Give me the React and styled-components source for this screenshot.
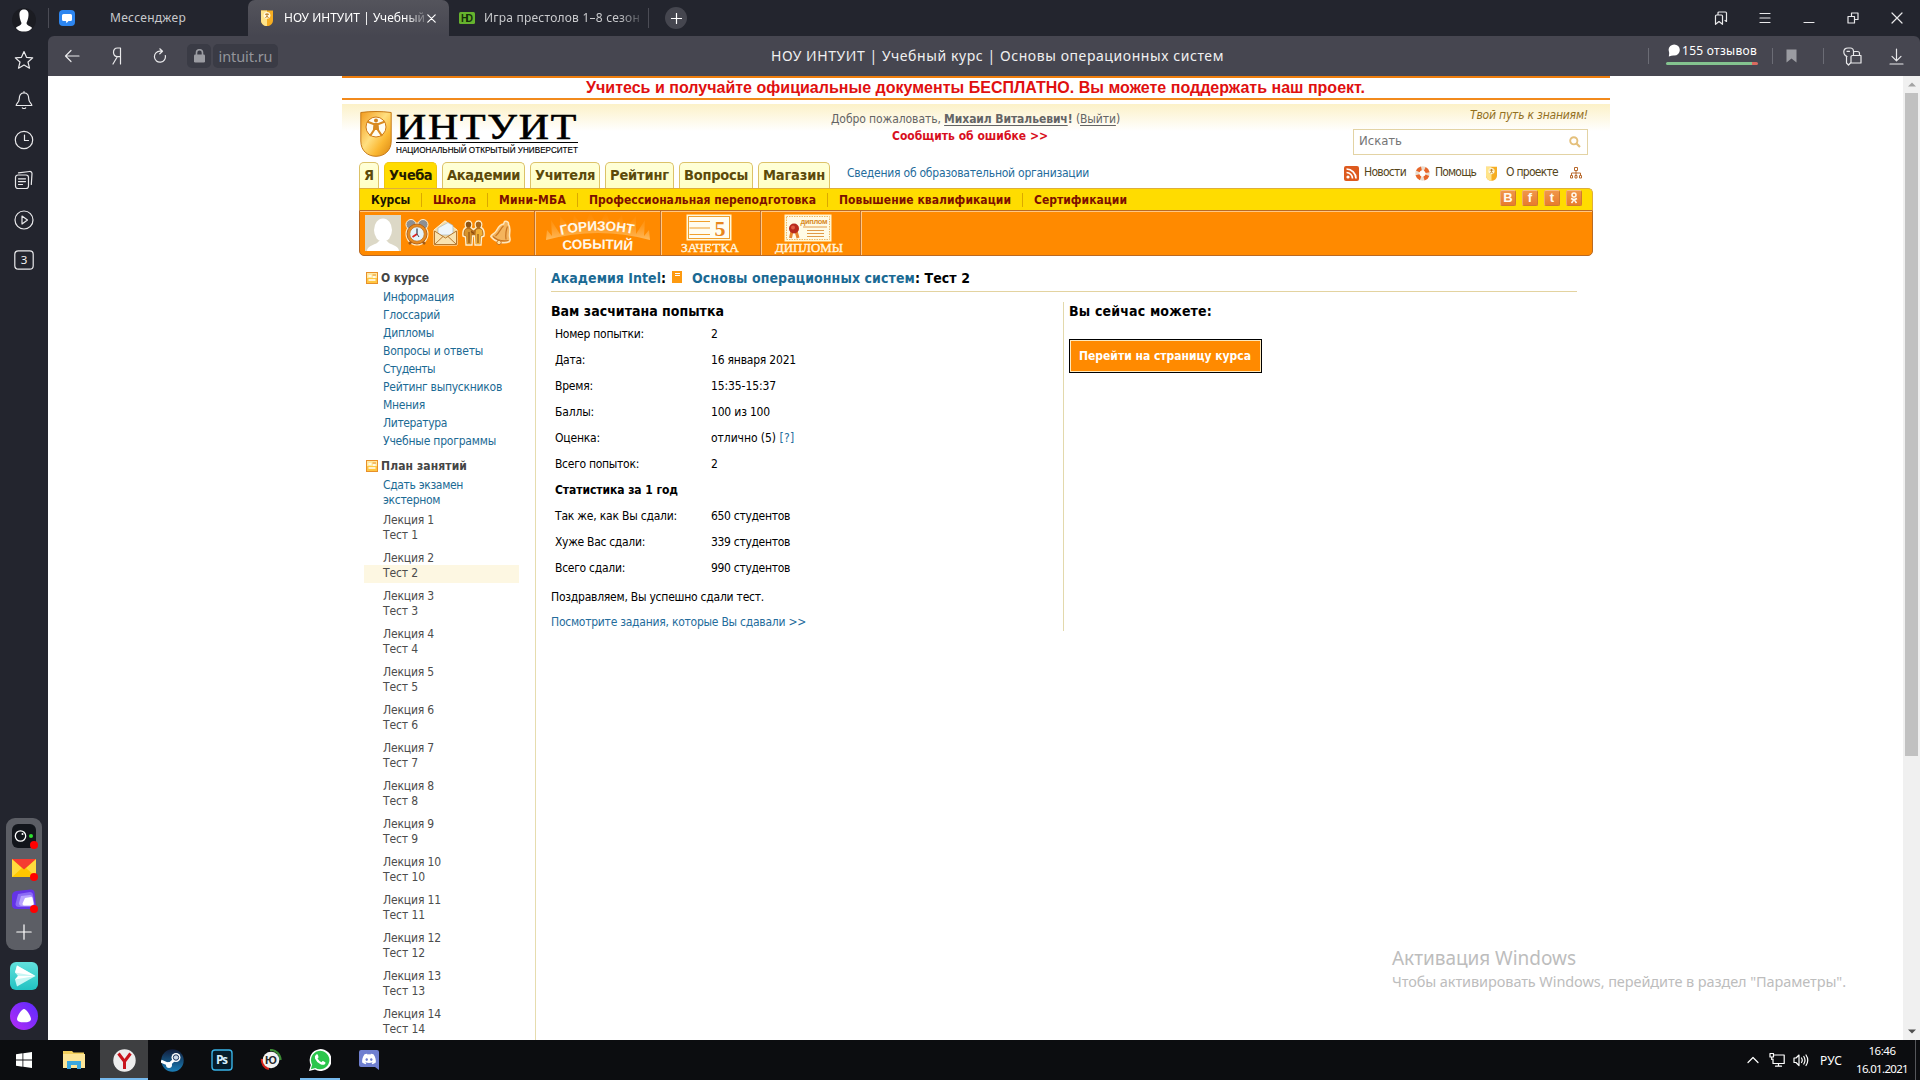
import React, { useLayoutEffect, useRef } from "react";
import styled, { createGlobalStyle, css } from "styled-components";
import { FaDiscord } from "react-icons/fa";

const tahoma = `Tahoma, "DejaVu Sans Condensed", "DejaVu Sans", sans-serif`;
const segoe = `"Segoe UI", "Noto Sans", "Open Sans", sans-serif`;

const Global = createGlobalStyle`
  * { box-sizing: border-box; }
  body { margin: 0; overflow: hidden; background: #fff; }
  svg { display: block; flex: none; }
`;

/* ---------- text that tracks itself out to a known width ---------- */
const FitBox = styled.span`
  display: inline-block;
  flex: none;
  white-space: nowrap;
  width: ${(p) => p.$w}px;
`;
function Fit({ w, children, className }) {
  const ref = useRef(null);
  useLayoutEffect(() => {
    const el = ref.current;
    el.style.letterSpacing = "0px";
    const natural = el.getBoundingClientRect().width;
    const n = el.textContent.length;
    el.style.letterSpacing = `${(w - natural) / n}px`;
  }, [w, children]);
  return (
    <FitBox $w={w} className={className}>
      <span ref={ref}>{children}</span>
    </FitBox>
  );
}

/* ---------- frame ---------- */
const Screen = styled.div`
  width: 1920px;
  height: 1080px;
  display: flex;
  flex-direction: column;
  overflow: hidden;
  position: relative;
  font-family: ${tahoma};
  font-size: 12px;
  color: #000;
`;
const Browser = styled.div`
  height: 1040px;
  display: flex;
  background: #23252e;
`;
const Main = styled.div`
  width: 1872px;
  display: flex;
  flex-direction: column;
`;

/* ---------- browser side panel ---------- */
const Side = styled.aside`
  width: 48px;
  display: flex;
  flex-direction: column;
  align-items: center;
`;
const SideSlot = styled.div`
  height: 40px;
  width: 48px;
  display: flex;
  align-items: center;
  justify-content: center;
`;
const Dock = styled.div`
  margin-top: auto;
  width: 36px;
  height: 132px;
  border-radius: 9px;
  background: #5c5e65;
  display: flex;
  flex-direction: column;
  align-items: center;
  padding-top: 2px;
`;
const DockSlot = styled.div`
  width: 36px;
  height: 32px;
  display: flex;
  align-items: center;
  justify-content: center;
`;
const BigSlot = styled.div`
  height: 40px;
  display: flex;
  align-items: center;
  margin-top: ${(p) => p.$top || 0}px;
  margin-bottom: ${(p) => p.$bottom || 0}px;
`;

/* ---------- tab strip ---------- */
const Strip = styled.div`
  height: 36px;
  display: flex;
  align-items: stretch;
  font-family: ${segoe};
  font-size: 12px;
  color: #c9cacd;
`;
const BTab = styled.div`
  width: ${(p) => p.$w}px;
  display: flex;
  align-items: center;
  padding-left: ${(p) => p.$pl}px;
  line-height: 36px;
  ${(p) =>
    p.$active &&
    css`
      background: linear-gradient(#54545c, #464650);
      border-radius: 7px 7px 0 0;
      color: #fff;
    `}
`;
const TabText = styled.div`
  margin-left: ${(p) => p.$ml}px;
`;
const FadeText = styled(TabText)`
  width: ${(p) => p.$w}px;
  mask-image: linear-gradient(to right, #000 85%, transparent 103%);
`;
const VLine = styled.i`
  width: 1px;
  flex: none;
  height: ${(p) => p.$h}px;
  background: ${(p) => p.$c || "#4b4c55"};
  margin: 0 ${(p) => p.$r || 0}px 0 ${(p) => p.$l || 0}px;
  align-self: center;
`;
const PlusBtn = styled.div`
  width: 22px;
  height: 22px;
  border-radius: 50%;
  background: #45464f;
  align-self: center;
  display: flex;
  align-items: center;
  justify-content: center;
`;
const WinBtns = styled.div`
  margin-left: auto;
  padding-right: 1px;
  display: flex;
  align-items: center;
`;
const WinSlot = styled.div`
  width: 44px;
  display: flex;
  justify-content: center;
`;

/* ---------- toolbar ---------- */
const Toolbar = styled.div`
  height: 40px;
  background: #464650;
  border-radius: 6px 6px 0 0;
  display: flex;
  align-items: center;
  font-family: ${segoe};
  color: #fff;
`;
const IconCell = styled.div`
  width: ${(p) => p.$w}px;
  display: flex;
  justify-content: center;
`;
const AddrBox = styled.div`
  height: 24px;
  width: ${(p) => p.$w}px;
  margin-right: ${(p) => p.$mr}px;
  border-radius: 5px;
  background: #3a3b45;
  display: flex;
  align-items: center;
  justify-content: center;
  font-size: 14.5px;
  line-height: 22px;
  color: #94959b;
`;
const PageTitle = styled.div`
  margin-left: 493px;
  font-size: 14px;
  line-height: 38px;
  color: #f0f0f1;
`;
const Reviews = styled.div`
  width: 92px;
  margin-left: 17px;
  margin-top: -1px;
  display: flex;
  flex-direction: column;
  font-size: 12px;
  line-height: 14px;
  height: 24px;
`;
const ReviewLine = styled.div`
  display: flex;
  height: 18px;
  padding-left: 2px;
  gap: 2px;
`;
const Meter = styled.div`
  height: 3px;
  border-radius: 2px;
  background: linear-gradient(to right, #84c38f 0 86px, #d9695f 86px);
`;

/* ---------- viewport ---------- */
const Viewport = styled.div`
  height: 964px;
  display: flex;
  background: #fff;
`;
const Page = styled.div`
  width: 1855px;
  overflow: hidden;
  padding-left: 294px;
`;
const Scroll = styled.div`
  width: 17px;
  background: #f0f0f0;
  display: flex;
  flex-direction: column;
  align-items: center;
`;
const Arrow = styled.div`
  height: 17px;
  display: flex;
  align-items: center;
`;
const Thumb = styled.div`
  width: 13px;
  height: 663px;
  background: #c1c1c1;
  margin-bottom: auto;
`;

const Site = styled.div`
  width: 1268px;
  height: 964px;
  overflow: hidden;
`;
const Banner = styled.div`
  height: 24px;
  border-top: 2px solid #ee7d0c;
  border-bottom: 2px solid #f28a1c;
  margin-bottom: 4px;
  padding-left: 244px;
  font: bold 16px/20px Arial, "Liberation Sans", sans-serif;
  color: #e01010;
`;
const Head = styled.div`
  background: linear-gradient(#fcf1c8 0, #fff 27px);
  padding: 0 17px;
`;
const HeadRow = styled.div`
  height: 58px;
  display: flex;
`;
const Logo = styled.div`
  padding: 7px 0 0 1px;
  display: flex;
  gap: 4px;
`;
const Welcome = styled.div`
  margin-left: 247px;
  padding-top: 7px;
  display: flex;
  flex-direction: column;
  line-height: 17px;
  color: #646464;
  u { text-decoration-thickness: 1px; text-underline-offset: 2px; }
`;
const Report = styled.div`
  padding-left: 61px;
  font-weight: bold;
  color: #d80f1e;
`;
const SearchCol = styled.div`
  margin-left: auto;
  width: 235px;
  margin-right: 5px;
  display: flex;
  flex-direction: column;
`;
const Motto = styled.div`
  height: 25px;
  line-height: 22px;
  font-style: italic;
  color: #93701f;
  text-align: right;
`;
const SearchBox = styled.div`
  height: 26px;
  border: 1px solid #e3d3a4;
  background: #fff;
  display: flex;
  align-items: center;
  justify-content: space-between;
  padding: 0 6px 0 5px;
  color: #757575;
  font-size: 13px;
  line-height: 20px;
`;
const SearchText = styled.span`
  padding-bottom: 2px;
`;
const NavRow = styled.nav`
  height: 26px;
  display: flex;
  gap: 5px;
`;
const SiteTab = styled.a`
  width: ${(p) => p.$w}px;
  height: 26px;
  border: 1px solid ${(p) => (p.$on ? "#f2c80a" : "#dcc268")};
  border-bottom: 0;
  border-radius: 5px 5px 0 0;
  background: ${(p) => (p.$on ? "#ffdc00" : "linear-gradient(#ffffd8, #ffffc4)")};
  color: ${(p) => (p.$on ? "#241c00" : "#5c4a0a")};
  font-weight: bold;
  font-size: 14.5px;
  line-height: 25px;
  padding-left: 4px;
`;
const OrgLink = styled.a`
  margin-left: 12px;
  line-height: 22px;
  color: #246c9c;
`;
const Tools = styled.div`
  margin-left: auto;
  display: flex;
  align-items: center;
  height: 22px;
  color: #54451a;
  padding-right: 11px;
`;
const ToolText = styled.span`
  margin: -3px ${(p) => p.$r}px 0 ${(p) => p.$l}px;
`;
const Yellow = styled.div`
  width: 1234px;
  margin-left: 17px;
  height: 22px;
  background: #ffdc00;
  border: 1px solid #dfae3a;
  border-bottom: 0;
  border-radius: 0 5px 0 0;
  display: flex;
  align-items: center;
  font-weight: bold;
  padding: 0 10px 0 11px;
`;
const SubItem = styled.a`
  color: ${(p) => (p.$on ? "#1a1400" : "#7c1000")};
  line-height: 20px;
`;
const Social = styled.div`
  margin-left: auto;
  margin-top: -3px;
  display: flex;
  gap: 6px;
`;
const SocBtn = styled.span`
  width: 16px;
  height: 16px;
  border-radius: 2px;
  border: 1px solid #d07a30;
  border-top-color: #f7bd84;
  border-left-color: #f0a868;
  background: linear-gradient(#f0964a, #e87c2c);
  color: #fffaf0;
  font: bold 13px/14px Arial, "Liberation Sans", sans-serif;
  display: flex;
  justify-content: center;
  align-items: center;
`;
const Orange = styled.div`
  width: 1234px;
  margin-left: 17px;
  height: 46px;
  background: #ff8a00;
  border: 1px solid #b96a24;
  border-radius: 0 0 5px 5px;
  box-shadow: inset 0 1px 0 #ffc684;
  display: flex;
`;
const OCell = styled.div`
  width: ${(p) => p.$w}px;
  height: 44px;
  border-right: 1px solid #c0702a;
  box-shadow: 1px 0 0 #ffc684;
  display: flex;
  align-items: center;
  justify-content: center;
`;
const UserCell = styled(OCell)`
  justify-content: flex-start;
  padding-left: 5px;
  gap: 4px;
`;

/* ---------- page body ---------- */
const Body = styled.div`
  display: flex;
  padding: 12px 0 0 17px;
`;
const Aside = styled.aside`
  width: 177px;
  height: 800px;
  border-right: 1px solid #e6dcae;
  padding-left: 5px;
`;
const SecTitle = styled.div`
  display: flex;
  align-items: center;
  gap: 3px;
  height: 20px;
  margin-top: ${(p) => p.$top || 0}px;
  padding-left: 2px;
  font-weight: bold;
  color: #454545;
`;
const List = styled.div`
  display: flex;
  flex-direction: column;
  padding-left: 19px;
  color: #1b6a94;
`;
const Item = styled.a`
  line-height: 18px;
  height: 18px;
`;
const Exam = styled(List)`
  padding-top: 2px;
  line-height: 15px;
`;
const LessonList = styled.div`
  padding-top: 5px;
`;
const Lesson = styled.div`
  display: flex;
  flex-direction: column;
  width: 155px;
  height: 38px;
  line-height: 15px;
  color: #4c4c4c;
`;
const Line = styled.span`
  padding-left: 19px;
  height: 15px;
  ${(p) =>
    p.$hl &&
    css`
      height: 18px;
      margin-top: -1px;
      padding-top: 1px;
      background: #fdf7e2;
    `}
`;
const Content = styled.main`
  width: 1026px;
  margin-left: 15px;
`;
const Crumbs = styled.div`
  height: 24px;
  border-bottom: 1px solid #e3d3a0;
  display: flex;
  font-weight: bold;
  font-size: 14px;
  line-height: 20px;
  a { color: #1b6a94; }
`;
const BookWrap = styled.span`
  margin: 3px 10px 0 6px;
`;
const Cols = styled.div`
  display: flex;
  padding-top: 10px;
`;
const Left = styled.section`
  width: 513px;
  height: 329px;
  border-right: 1px solid #e3d9ac;
`;
const Right = styled.section`
  padding-left: 5px;
`;
const H = styled.h2`
  margin: 0;
  font-size: 14px;
  line-height: 19px;
  height: 19px;
`;
const Row = styled.div`
  display: flex;
  height: 26px;
  line-height: 26px;
  padding-left: 4px;
`;
const Key = styled.div`
  width: 156px;
  font-weight: ${(p) => (p.$b ? "bold" : "normal")};
`;
const LinkText = styled.a`
  color: #246c9c;
`;
const Para = styled.p`
  margin: ${(p) => p.$top}px 0 0;
  line-height: 20px;
  height: 20px;
  color: ${(p) => p.$c || "#000"};
`;
const GoBtn = styled.button`
  display: block;
  margin: 18px 0 0;
  padding: 1px 0 0 9px;
  width: 193px;
  height: 34px;
  border: 1px solid #000;
  box-shadow: inset 0 0 0 1px #ffe9bd;
  background: #ff8a00;
  color: #fff;
  text-align: left;
  font: bold 12px/31px ${tahoma};
`;

/* ---------- activation watermark ---------- */
const Watermark = styled.div`
  position: absolute;
  left: 1392px;
  top: 945px;
  font-family: ${segoe};
  color: #bdbdbd;
  display: flex;
  flex-direction: column;
`;
const WmBig = styled.div`
  font-size: 19px;
  line-height: 26px;
`;
const WmSmall = styled.div`
  font-size: 14.5px;
  line-height: 20px;
`;

/* ---------- taskbar ---------- */
const Taskbar = styled.footer`
  height: 40px;
  background: #0c0d10;
  display: flex;
  font-family: ${segoe};
  color: #fff;
`;
const TaskBtn = styled.div`
  width: ${(p) => p.$w || 49}px;
  height: 40px;
  display: flex;
  align-items: center;
  justify-content: center;
  background: ${(p) => (p.$on ? "#3e3f41" : "transparent")};
  box-shadow: ${(p) => (p.$run ? "inset 0 -2px 0 #76b9ed" : "none")};
`;
const Tray = styled.div`
  margin-left: auto;
  display: flex;
  align-items: center;
  font-size: 12px;
`;
const Clock = styled.div`
  width: 52px;
  margin: 0 7px 0 14px;
  height: 40px;
  display: flex;
  flex-direction: column;
  align-items: center;
  font-size: 11.5px;
  line-height: 18px;
  padding-top: 2px;
`;

const Stroke = (p) => (
  <svg width={p.s || 20} height={p.h || p.s || 20} viewBox={p.vb || "0 0 20 20"} fill="none" stroke={p.c || "#e9e9eb"} strokeWidth={p.sw || 1.2} strokeLinecap="round" strokeLinejoin="round">
    {p.children}
  </svg>
);

const Shield = () => (
  <svg width="32" height="46" viewBox="0 0 32 46">
    <defs>
      <linearGradient id="shg" x1="0" y1="0" x2="1" y2="1">
        <stop offset="0" stopColor="#f29a1c" />
        <stop offset=".45" stopColor="#ffdf80" />
        <stop offset=".7" stopColor="#fbb832" />
        <stop offset="1" stopColor="#d98512" />
      </linearGradient>
    </defs>
    <path d="M.8 1.5C10 .2 22 .2 31.2 1.5V30C31.2 40 24 45.3 16 45.3S.8 40 .8 30Z" fill="url(#shg)" stroke="#c67a18" />
    <circle cx="16" cy="16" r="10" fill="#fffdf2" stroke="#d07a18" />
    <circle cx="16" cy="9.5" r="2" fill="#d0801c" />
    <path d="M7 10.5L14 13.2H18L25 10.5M16 13V19M14.5 13L14 19L10 25M17.5 13L18 19L22 25" stroke="#d98a20" strokeWidth="2.2" fill="none" />
  </svg>
);
const MiniShield = ({ w, h }) => (
  <svg width={w} height={h} viewBox="0 0 12 16">
    <path d="M0 .5H12V10C12 14 9 16 6 16S0 14 0 10Z" fill="#f6ad22" />
    <path d="M0 .5H6V16C3 16 0 14 0 10Z" fill="#ffe48a" />
    <circle cx="6" cy="5.3" r="3.4" fill="#fff8dc" />
    <path d="M4 4.3H8M6 3V6L4.5 8M6 6L7.5 8" stroke="#b5761c" fill="none" strokeWidth=".9" />
  </svg>
);

const SectionIcon = () => (
  <svg width="12" height="12" viewBox="0 0 12 12">
    <rect x=".5" y=".5" width="11" height="11" fill="#ffe9a0" stroke="#e8902a" />
    <path d="M1 6H11V11H1Z" fill="#ffc640" />
    <path d="M2.500 4H5.500M2.500 8H9.500M7 5H9.500" stroke="#fff" strokeWidth="1.3" />
    <path d="M6.500 3H10" stroke="#e8902a" />
  </svg>
);

const courseLinks = [
  ["Информация", 71], ["Глоссарий", 57], ["Дипломы", 51], ["Вопросы и ответы", 100], ["Студенты", 52],
  ["Рейтинг выпускников", 119], ["Мнения", 42], ["Литература", 64], ["Учебные программы", 113],
];
const tabs = [
  ["Я", 20, 10], ["Учеба", 53, 43], ["Академии", 83, 73], ["Учителя", 70, 60], ["Рейтинг", 69, 59], ["Вопросы", 74, 64], ["Магазин", 72, 62],
];
const sub = [
  ["Курсы", 39], ["Школа", 43], ["Мини-МБА", 67], ["Профессиональная переподготовка", 227], ["Повышение квалификации", 172], ["Сертификации", 93],
];
const rows = [
  ["Номер попытки:", 89, "2", 7], ["Дата:", 30, "16 января 2021", 85], ["Время:", 38, "15:35-15:37", 65],
  ["Баллы:", 39, "100 из 100", 59], ["Оценка:", 45, "отлично (5)", 65, true], ["Всего попыток:", 84, "2", 7],
  ["Статистика за 1 год", 123], ["Так же, как Вы сдали:", 122, "650 студентов", 79], ["Хуже Вас сдали:", 90, "339 студентов", 79],
  ["Всего сдали:", 70, "990 студентов", 79],
];

function SidePanel() {
  return (
    <Side>
      <SideSlot>
        <svg width="24" height="24" viewBox="0 0 24 24">
          <circle cx="12" cy="12" r="12" fill="#1b1c22" />
          <path d="M12 1.500C15.500 1.500 16.800 4 16.500 7.500C16.300 11 15 13.500 14.500 15C14.500 18 20 18.500 20 20C18 23 14.500 23.500 12 23.500S6 23 4 20C4 18.500 9.500 18 9.500 15C9 13.500 7.700 11 7.500 7.500C7.200 4 8.500 1.500 12 1.500Z" fill="#fff" />
        </svg>
      </SideSlot>
      <SideSlot><Stroke><path d="M10 1.500L12.500 7.300L18.700 7.900L14 12L15.500 18.200L10 14.900L4.500 18.200L6 12L1.300 7.900L7.500 7.300Z" /></Stroke></SideSlot>
      <SideSlot><Stroke><path d="M10 1.500V2.800M10 2.800C6.500 2.800 5.300 5.500 5.300 8.500C5.300 12.500 2.200 13.500 2.200 15.500H17.800C17.800 13.500 14.700 12.500 14.700 8.500C14.700 5.500 13.500 2.800 10 2.800ZM8.300 17.800C9.200 18.700 10.800 18.700 11.700 17.800" /></Stroke></SideSlot>
      <SideSlot><Stroke><circle cx="10" cy="10" r="8.700" /><path d="M10.500 5V10.500H14.500" /></Stroke></SideSlot>
      <SideSlot><Stroke><rect x="1.500" y="5" width="13" height="13.500" rx="2.500" /><path d="M4.500 2.800L15.500 1.500C17 1.300 18 2.200 18 3.500L17.300 14.500M4.500 8.800H11.500M4.500 11.600H11.500M4.500 14.500H8.500" /></Stroke></SideSlot>
      <SideSlot><Stroke><circle cx="10" cy="10" r="9" /><path d="M8 6L13.500 10L8 14Z" /></Stroke></SideSlot>
      <SideSlot>
        <svg width="20" height="20" viewBox="0 0 20 20">
          <rect x=".8" y=".8" width="18.400" height="18.400" rx="3.500" fill="none" stroke="#e9e9eb" strokeWidth="1.200" />
          <text x="10" y="14.300" textAnchor="middle" fontSize="11.500" fill="#f2f2f3" fontFamily="Noto Sans, sans-serif">3</text>
        </svg>
      </SideSlot>
      <Dock>
        <DockSlot>
          <svg width="28" height="28" viewBox="0 0 28 28">
            <rect x="2" y="2" width="24" height="24" rx="6" fill="#12151b" />
            <circle cx="10.500" cy="14" r="5.200" fill="none" stroke="#fff" strokeWidth="1.300" />
            <circle cx="12.500" cy="12" r="1" fill="#fff" /><circle cx="21" cy="14" r="2" fill="#2fe02f" /><circle cx="24" cy="23" r="4" fill="#f00" />
          </svg>
        </DockSlot>
        <DockSlot>
          <svg width="28" height="28" viewBox="0 0 28 28">
            <path d="M2 5H26V23H2Z" fill="#ffc800" /><path d="M2 5L12 14L2 23Z M26 5L16 14L26 23Z" fill="#ffdb3d" />
            <path d="M2 5H26L14 15.500Z" fill="#f53b31" /><circle cx="24" cy="23" r="4" fill="#f00" />
          </svg>
        </DockSlot>
        <DockSlot>
          <svg width="28" height="28" viewBox="0 0 28 28">
            <path d="M6 5L21 3.500Q24 3.500 24.500 6L26 20Q26 23 23 23H6Q2 23 2 19V10Q2 6 6 5Z" fill="#6434e6" />
            <path d="M8 8L20 6Q22 6 23 8L24.500 18Q24.500 21 22 21H9Q5.500 21 5.500 18Z" fill="#8b6bf5" />
            <path d="M11 10L20 9Q22 9 22.500 11L24 18Q24 20 22 20H12Q9 20 9 17Z" fill="#b8a3ff" />
            <path d="M15 12L21 11Q22.500 11 22.500 12L23.500 17.500Q23.500 19.500 21.500 19.500H14Q12.500 19.500 12.500 17.500Z" fill="#fff" />
            <circle cx="24" cy="23" r="4" fill="#f00" />
          </svg>
        </DockSlot>
        <DockSlot><Stroke s={16} vb="0 0 16 16" c="#fff"><path d="M8 .8V15.200M.8 8H15.200" /></Stroke></DockSlot>
      </Dock>
      <BigSlot $top={6}>
        <svg width="28" height="28" viewBox="0 0 28 28">
          <defs><linearGradient id="pg" x1="0" y1="0" x2="0" y2="1"><stop offset="0" stopColor="#62e0dc" /><stop offset="1" stopColor="#20c2c2" /></linearGradient></defs>
          <rect width="28" height="28" rx="6" fill="url(#pg)" />
          <path d="M7 3.500L25.500 14L7 24.500L5 17.500L8 14L5 10.500Z" fill="#c7f6f4" /><path d="M7 3.500L25.500 14L5 10.500ZM5 17.500L25.500 14L8 14Z" fill="#fff" />
        </svg>
      </BigSlot>
      <BigSlot $bottom={4}>
        <svg width="28" height="28" viewBox="0 0 28 28">
          <defs><linearGradient id="ag" x1="0" y1="1" x2="1" y2="0"><stop offset="0" stopColor="#b52cf5" /><stop offset="1" stopColor="#5a2bff" /></linearGradient></defs>
          <circle cx="14" cy="14" r="14" fill="url(#ag)" />
          <path d="M14 7C16.500 7 21 14.500 21 17C21 19.500 18 20.300 14 20.300S7 19.500 7 17C7 14.500 11.500 7 14 7Z" fill="#fff" />
        </svg>
      </BigSlot>
    </Side>
  );
}

function BrowserChrome() {
  return (
    <>
      <Strip>
        <VLine $h={20} />
        <BTab $w={199} $pl={10}>
          <svg width="16" height="16" viewBox="0 0 16 16"><rect width="16" height="16" rx="4" fill="#2d86f0" /><path d="M4.500 4H11.500Q13 4 13 5.500V9.500Q13 11 11.500 11H9.500L7.500 13.300L7 11H4.500Q3 11 3 9.500V5.500Q3 4 4.500 4Z" fill="#fff" /></svg>
          <TabText $ml={35}><Fit w={76}>Мессенджер</Fit></TabText>
        </BTab>
        <BTab $active $w={201} $pl={13}>
          <MiniShield w={12} h={16} />
          <FadeText $w={143} $ml={11}><Fit w={141}>НОУ ИНТУИТ | Учебный</Fit></FadeText>
          <Stroke s={9} vb="0 0 9 9" c="#fff"><path d="M.8 .8L8.200 8.200M8.200 .8L.8 8.200" /></Stroke>
        </BTab>
        <BTab $w={199} $pl={10}>
          <svg width="16" height="12" viewBox="0 0 16 12"><rect width="16" height="12" rx="1.500" fill="#66b32e" /><text x="8" y="9.800" textAnchor="middle" textLength="12" fontSize="10" fontWeight="bold" fill="#16300a" fontFamily="Liberation Sans, sans-serif">HD</text></svg>
          <FadeText $w={158} $ml={9}><Fit w={156}>Игра престолов 1–8 сезон</Fit></FadeText>
        </BTab>
        <VLine $h={20} $r={16} />
        <PlusBtn><Stroke s={11} vb="0 0 11 11" c="#fff"><path d="M5.500 .5V10.500M.5 5.500H10.500" /></Stroke></PlusBtn>
        <WinBtns>
          <WinSlot><Stroke s={14} vb="0 0 14 14"><path d="M1.500 5Q1.500 4 2.500 4H7.500Q8.500 4 8.500 5V13.300L5 10.500L1.500 13.300ZM4 3.800V2Q4 1 5 1H11.500Q12.500 1 12.500 2V10.500L11 9.500" /></Stroke></WinSlot>
          <WinSlot><Stroke s={12} vb="0 0 12 12"><path d="M1 1.500H11M1 6H11M1 10.500H11" /></Stroke></WinSlot>
          <WinSlot><Stroke s={12} vb="0 0 12 12"><path d="M1 10.500H11" /></Stroke></WinSlot>
          <WinSlot><Stroke s={12} vb="0 0 12 12"><path d="M1 4.500H7.500V11H1ZM4.500 4.500V1H11V7.500H7.500" /></Stroke></WinSlot>
          <WinSlot><Stroke s={12} vb="0 0 12 12"><path d="M1 1L11 11M11 1L1 11" /></Stroke></WinSlot>
        </WinBtns>
      </Strip>
      <Toolbar>
        <IconCell $w={48}><Stroke s={16} vb="0 0 16 16"><path d="M15 8H1.500M7 2.500L1.500 8L7 13.500" /></Stroke></IconCell>
        <IconCell $w={42}><Stroke s={18} vb="0 0 18 18"><path d="M12.500 17V1H9.500C6.500 1 5.500 3 5.500 5.300C5.500 8 7 9.700 9.700 9.700H12.500M9.300 9.700L5 17" /></Stroke></IconCell>
        <IconCell $w={43}><Stroke s={16} vb="0 0 16 16"><path d="M13.300 7.500A5.500 5.500 0 1 1 8 3.200H10M7.800 .8L10.500 3.200L7.800 5.800" /></Stroke></IconCell>
        <IconCell $w={6} />
        <AddrBox $w={24} $mr={2}>
          <svg width="11" height="14" viewBox="0 0 11 14"><rect y="5.500" width="11" height="8" rx="1.300" fill="#9b9ca2" /><path d="M2.500 6V3.700A3 3 0 0 1 8.500 3.700V6" fill="none" stroke="#9b9ca2" strokeWidth="1.600" /></svg>
        </AddrBox>
        <AddrBox $w={65} $mr={0}><Fit w={54}>intuit.ru</Fit></AddrBox>
        <PageTitle><Fit w={453}>НОУ ИНТУИТ | Учебный курс | Основы операционных систем</Fit></PageTitle>
        <VLine $h={16} $c="#6b6c75" $l={424} />
        <Reviews>
          <ReviewLine>
            <svg width="12" height="13" viewBox="0 0 12 13"><circle cx="6.200" cy="6" r="5.600" fill="#fff" /><path d="M1.500 7L.8 12.500L6 11Z" fill="#fff" /></svg>
            <Fit w={75}>155 отзывов</Fit>
          </ReviewLine>
          <Meter />
        </Reviews>
        <VLine $h={16} $c="#6b6c75" $l={14} $r={13} />
        <svg width="11" height="14" viewBox="0 0 11 14"><path d="M.5 .5H10.500V13.500L5.500 9.500L.5 13.500Z" fill="#9b9ca2" /></svg>
        <VLine $h={16} $c="#6b6c75" $l={26} $r={19} />
        <Stroke s={19} vb="0 0 19 19"><path d="M4 9.500C1.500 8.500 .8 6.500 .8 4.800C.8 2.500 2.500 1 5 1H7.500C9 1 10.500 2.500 10.500 4.500M3.500 9V16L5.500 18L8 15.500V9.500M4 4.300H6.500M10.500 7.500V5.500Q10.500 4.500 11.500 4.500H14.500Q16.500 4.500 16.500 6.500V8.500M8 9.800Q8 8.500 9.500 8.500H18V16H8" /></Stroke>
        <VLine $h={1} $c="transparent" $l={26} />
        <Stroke s={15} h={17} vb="0 0 15 17"><path d="M7.500 1V12.500M3 8.300L7.500 12.800L12 8.300M1 16H14" /></Stroke>
      </Toolbar>
    </>
  );
}

function OrangeBar() {
  return (
    <Orange>
      <UserCell $w={175}>
        <svg width="36" height="36" viewBox="0 0 36 36"><rect width="36" height="36" fill="#dcd8c6" /><ellipse cx="18" cy="15" rx="9" ry="11.500" fill="#fff" /><path d="M2 36C2 30 12 30 14 26H22C24 30 34 30 34 36Z" fill="#fff" /></svg>
        <svg width="24" height="28" viewBox="0 0 24 28">
          <circle cx="12" cy="15" r="11.500" fill="#ffe9c0" />
          <circle cx="6" cy="5.500" r="5" fill="#8d8f92" stroke="#fff0d0" /><circle cx="18" cy="5.500" r="5" fill="#8d8f92" stroke="#fff0d0" />
          <path d="M4 25L7 22M20 25L17 22" stroke="#a35a14" strokeWidth="2.500" />
          <circle cx="12" cy="15" r="10" fill="#e98a1c" stroke="#b4641a" /><circle cx="12" cy="15" r="7.300" fill="#e4f3fa" stroke="#c97b28" />
          <path d="M12 9.500V15" stroke="#445" strokeWidth="1.300" /><path d="M12 15L7.500 18" stroke="#d22" strokeWidth="1.800" /><path d="M12 15L14 18" stroke="#445" />
        </svg>
        <svg width="25" height="26" viewBox="0 0 25 26">
          <path d="M1 10L12 .8L24 10V25H1Z" fill="#f5dca4" stroke="#fff3d8" /><path d="M5 8L15 2.500L20 5.500V15H5Z" fill="#eef6fb" stroke="#a9b7bf" strokeWidth=".7" />
          <path d="M1.500 11L12.500 18L23.500 11V24.500H1.500Z" fill="#f9e3b0" stroke="#b47830" /><path d="M1.500 24.500L10 16.500M23.500 24.500L15 16.500" stroke="#b47830" />
        </svg>
        <svg width="23" height="26" viewBox="0 0 23 26">
          <path d="M6.500 1C9.500 1 10.500 4 9 7.500L11.500 9.500L14 7.500C12.500 4 13.500 1 16.500 1S20.500 4 19 7.500C22 9 22.500 12 22 16L19.500 17L19 25H13L12.500 16H10.500L10 25H4L3.500 17L1 16C.5 12 1 9 4 7.500C2.500 4 3.500 1 6.500 1Z" fill="#b8701c" stroke="#fff0cc" strokeWidth="1.400" />
          <circle cx="6.500" cy="4.500" r="2.700" fill="#8c5212" /><circle cx="16.500" cy="4.500" r="2.700" fill="#a9661a" />
          <path d="M3 10Q6 8 9 10L9.500 15L9 24H5L4.500 16L2.500 15Z" fill="#d8942c" /><path d="M14 10Q17 8 20 10L20.500 15L18.500 16L18 24H14L13.500 15Z" fill="#f0b038" />
          <path d="M7 12V23M16 14V23M9 11.500L12 13.500" stroke="#8a4c10" strokeWidth="1.100" />
        </svg>
        <svg width="24" height="26" viewBox="0 0 24 26">
          <path d="M15.500 1.500C18 .8 20 2 19.500 4.500C22 7 20.500 12 20.500 15.500C20.500 18 22 19.500 20.500 21.500C15 24.500 6 22 1.800 16.500C2 14.500 5.500 14 7.500 10.500C9.500 7 10.500 4.500 14.500 4Z" fill="#f4b45c" stroke="#ffe6bc" strokeWidth="1.500" />
          <path d="M14.500 6C11.500 8 10.500 13 6.500 16M18.500 6.500C16.500 11 16.500 15 17 19.500M4 16.500C8 20.500 14 21.500 19.500 20.500" stroke="#c97420" fill="none" strokeWidth="1.200" /><circle cx="10" cy="22.500" r="2.200" fill="#ffdf9c" stroke="#c97420" />
        </svg>
      </UserCell>
      <OCell $w={126}>
        <svg width="104" height="42" viewBox="0 0 104 42" overflow="visible">
          <defs>
            <linearGradient id="ray" x1="0" y1="0" x2="0" y2="1"><stop offset="0" stopColor="#ff9d28" stopOpacity="0" /><stop offset="1" stopColor="#ffdc9c" /></linearGradient>
            <path id="arcA" d="M15 23Q52 14 92 23" /><path id="arcB" d="M17 38Q52 35 92 39" />
          </defs>
          <path d="M0 28L1 18L6 24L5 8L14 22L14 4L26 18L28 3L38 16L44 0L52 15L60 0L66 16L76 3L78 18L90 4L90 22L99 8L98 24L103 18L104 28Q52 14 0 28Z" fill="url(#ray)" opacity=".6" />
          <g fontFamily="Liberation Sans, sans-serif" fontSize="13.500" fontWeight="bold" fill="#fff8ea">
            <text><textPath href="#arcA" textLength="73">ГОРИЗОНТ</textPath></text>
            <text><textPath href="#arcB" textLength="70">СОБЫТИЙ</textPath></text>
          </g>
        </svg>
      </OCell>
      <OCell $w={100}>
        <svg width="62" height="42" viewBox="0 0 62 42">
          <rect x="7" y="3" width="44" height="25" fill="#fffdf0" stroke="#fff3c8" /><rect x="8.500" y="4.500" width="41" height="22" fill="none" stroke="#f0a02c" />
          <path d="M9.500 9.500H30M9.500 16H30M9.500 22.500H30" stroke="#f0a02c" strokeWidth="1.200" />
          <text x="40" y="23.500" textAnchor="middle" fontSize="22" fontWeight="bold" fill="#e8861c" fontFamily="Liberation Serif, serif">5</text>
          <text x="1" y="40" textLength="58" lengthAdjust="spacingAndGlyphs" fontSize="13" fill="#fff4dc" stroke="#fff4dc" strokeWidth=".4" fontFamily="Liberation Serif, serif">ЗАЧЕТКА</text>
        </svg>
      </OCell>
      <OCell $w={100}>
        <svg width="76" height="42" viewBox="0 0 76 42">
          <rect x="12" y="3" width="46" height="26" fill="#fffbe6" stroke="#fff3c8" /><rect x="13.500" y="4.500" width="43" height="23" fill="none" stroke="#eeb860" strokeDasharray="1.500 1" />
          <text x="27.500" y="12" textLength="27" fontSize="7.500" fontWeight="bold" fill="#d88a28" fontFamily="Liberation Sans, sans-serif">диплом</text>
          <path d="M30 15H54M34 18.500H51M34 21.500H51M34 24.500H51" stroke="#e09a48" /><path d="M19 19L17.500 26M23 19L25 26" stroke="#e8842c" strokeWidth="3" /><circle cx="21" cy="16.500" r="5" fill="#b82a1c" /><circle cx="20" cy="15.500" r="2" fill="#e05a40" />
          <text x="2" y="40" textLength="68" lengthAdjust="spacingAndGlyphs" fontSize="13" fill="#fff4dc" stroke="#fff4dc" strokeWidth=".4" fontFamily="Liberation Serif, serif">ДИПЛОМЫ</text>
        </svg>
      </OCell>
    </Orange>
  );
}

function SiteHeader() {
  return (
    <>
      <Banner><Fit w={779}>Учитесь и получайте официальные документы БЕСПЛАТНО. Вы можете поддержать наш проект.</Fit></Banner>
      <Head>
        <HeadRow>
          <Logo>
            <Shield />
            <svg width="188" height="50" viewBox="0 0 188 50">
              <text x="0" y="27.500" textLength="182" lengthAdjust="spacingAndGlyphs" letterSpacing="1.500" fontSize="35" fill="#000" stroke="#000" strokeWidth=".6" fontFamily="Liberation Serif, serif">ИНТУИТ</text>
              <path d="M0 31.500H182" stroke="#000" />
              <text x="0" y="42" textLength="182" lengthAdjust="spacingAndGlyphs" fontSize="8.800" fill="#000" stroke="#000" strokeWidth=".15" fontFamily="Liberation Sans, sans-serif">НАЦИОНАЛЬНЫЙ ОТКРЫТЫЙ УНИВЕРСИТЕТ</text>
            </svg>
          </Logo>
          <Welcome>
            <div><Fit w={289}>Добро пожаловать, <b><u>Михаил Витальевич</u>!</b> (<u>Выйти</u>)</Fit></div>
            <Report><Fit w={156}>Сообщить об ошибке &gt;&gt;</Fit></Report>
          </Welcome>
          <SearchCol>
            <Motto><Fit w={118}>Твой путь к знаниям!</Fit></Motto>
            <SearchBox>
              <SearchText><Fit w={43}>Искать</Fit></SearchText>
              <svg width="12" height="12" viewBox="0 0 12 12"><circle cx="4.800" cy="4.800" r="3.600" fill="none" stroke="#e4c07c" strokeWidth="1.900" /><path d="M7.500 7.500L11 11" stroke="#e4c07c" strokeWidth="2.200" /></svg>
            </SearchBox>
          </SearchCol>
        </HeadRow>
        <NavRow>
          {tabs.map(([t, w, f]) => (
            <SiteTab key={t} $w={w} $on={t === "Учеба"}><Fit w={f}>{t}</Fit></SiteTab>
          ))}
          <OrgLink><Fit w={242}>Сведения об образовательной организации</Fit></OrgLink>
          <Tools>
            <svg width="15" height="15" viewBox="0 0 15 15"><rect width="15" height="15" rx="2" fill="#dd5a1e" /><circle cx="4" cy="11" r="1.600" fill="#fff" /><path d="M2.500 6.500A6 6 0 0 1 8.500 12.500M2.500 3A9.500 9.500 0 0 1 12 12.500" stroke="#fff" strokeWidth="1.700" fill="none" /></svg>
            <ToolText $l={5} $r={9}><Fit w={42}>Новости</Fit></ToolText>
            <svg width="15" height="15" viewBox="0 0 15 15"><circle cx="7.500" cy="7.500" r="5.200" fill="none" stroke="#e9dccf" strokeWidth="4" /><circle cx="7.500" cy="7.500" r="5.200" fill="none" stroke="#e8662a" strokeWidth="4" strokeDasharray="4.600 3.560" strokeDashoffset="-1.800" /></svg>
            <ToolText $l={5} $r={10}><Fit w={41}>Помощь</Fit></ToolText>
            <MiniShield w={11} h={15} />
            <ToolText $l={9} $r={12}><Fit w={52}>О проекте</Fit></ToolText>
            <svg width="12" height="12" viewBox="0 0 12 12" fill="none" stroke="#b8692c"><path d="M4.500 .5H7.500V3.500H4.500ZM.5 8.500H2.500V11H.5ZM5 8.500H7V11H5ZM9.500 8.500H11.500V11H9.500ZM6 3.500V8.500M1.500 8.500V6H10.500V8.500" /></svg>
          </Tools>
        </NavRow>
      </Head>
      <Yellow>
        {sub.map(([t, w], i) => (
          <React.Fragment key={t}>
            {i > 0 && <VLine $h={14} $c="#dba900" $l={11} $r={11} />}
            <SubItem $on={i === 0}><Fit w={w}>{t}</Fit></SubItem>
          </React.Fragment>
        ))}
        <Social>
          <SocBtn>B</SocBtn><SocBtn>f</SocBtn><SocBtn>t</SocBtn>
          <SocBtn><svg width="10" height="12" viewBox="0 0 10 12" fill="none" stroke="#fffaf0" strokeWidth="1.500"><circle cx="5" cy="3" r="2" /><path d="M2 6.500Q5 8.300 8 6.500M5 7.500L2.500 11M5 7.500L7.500 11" /></svg></SocBtn>
        </Social>
      </Yellow>
      <OrangeBar />
    </>
  );
}

function CourseNav() {
  return (
    <Aside>
      <SecTitle><SectionIcon /><Fit w={48}>О курсе</Fit></SecTitle>
      <List>{courseLinks.map(([t, w]) => <Item key={t}><Fit w={w}>{t}</Fit></Item>)}</List>
      <SecTitle $top={6}><SectionIcon /><Fit w={86}>План занятий</Fit></SecTitle>
      <Exam><Fit w={80}>Сдать экзамен</Fit><Fit w={57}>экстерном</Fit></Exam>
      <LessonList>
        {Array.from({ length: 14 }, (_, i) => i + 1).map((n) => (
          <Lesson key={n}>
            <Line><Fit w={n > 9 ? 58 : 51}>{`Лекция ${n}`}</Fit></Line>
            <Line $hl={n === 2}><Fit w={n > 9 ? 42 : 35}>{`Тест ${n}`}</Fit></Line>
          </Lesson>
        ))}
      </LessonList>
    </Aside>
  );
}

function Result() {
  return (
    <Content>
      <Crumbs>
        <a><Fit w={110}>Академия Intel</Fit></a><Fit w={5}>:</Fit>
        <BookWrap><svg width="10" height="12" viewBox="0 0 10 12"><path d="M0 0H10V12H0Z" fill="#fd9a10" /><path d="M3 2.500H8M3 4.500H8" stroke="#fff" /></svg></BookWrap>
        <a><Fit w={223}>Основы операционных систем</Fit></a><Fit w={55}>: Тест 2</Fit>
      </Crumbs>
      <Cols>
        <Left>
          <H><Fit w={173}>Вам засчитана попытка</Fit></H>
          {rows.map(([k, kw, v, vw, help]) => (
            <Row key={k}>
              <Key $b={!v}><Fit w={kw}>{k}</Fit></Key>
              {v && <Fit w={vw}>{v}</Fit>}
              {help && <LinkText>&nbsp;<Fit w={15}>[?]</Fit></LinkText>}
            </Row>
          ))}
          <Para $top={6}><Fit w={213}>Поздравляем, Вы успешно сдали тест.</Fit></Para>
          <Para $top={5} $c="#246c9c"><Fit w={255}>Посмотрите задания, которые Вы сдавали &gt;&gt;</Fit></Para>
        </Left>
        <Right>
          <H><Fit w={143}>Вы сейчас можете:</Fit></H>
          <GoBtn><Fit w={172}>Перейти на страницу курса</Fit></GoBtn>
        </Right>
      </Cols>
    </Content>
  );
}

function WindowsBar() {
  return (
    <Taskbar>
      <TaskBtn $w={48}><svg width="16" height="16" viewBox="0 0 16 16" fill="#fff"><path d="M0 2.200L6.500 1.300V7.600H0ZM7.300 1.200L16 0V7.600H7.300ZM0 8.400H6.500V14.700L0 13.800ZM7.300 8.400H16V16L7.300 14.800Z" /></svg></TaskBtn>
      <TaskBtn $w={52}><svg width="22" height="18" viewBox="0 0 22 18"><path d="M0 0H9L10.500 1.500H21V17H0Z" fill="#f3cf5c" /><path d="M0 3H22V17H0Z" fill="#fde597" /><path d="M4 10H18V18H14V14H8V18H4Z" fill="#3ba7df" /></svg></TaskBtn>
      <TaskBtn $w={48} $on $run><svg width="23" height="23" viewBox="0 0 23 23"><circle cx="11.500" cy="11.500" r="11.200" fill="#ededed" /><path d="M5.500 4.500L11.500 12.500L17.500 4.500M11.500 12V20" stroke="#c8141c" strokeWidth="3" fill="none" /></svg></TaskBtn>
      <TaskBtn><svg width="23" height="23" viewBox="0 0 23 23"><defs><linearGradient id="sg" x1="0" y1="0" x2="0" y2="1"><stop offset="0" stopColor="#111d3c" /><stop offset="1" stopColor="#1b7fb8" /></linearGradient></defs><circle cx="11.500" cy="11.500" r="11.200" fill="url(#sg)" /><path d="M0 12L8 15.500L13 11" stroke="#fff" strokeWidth="3" fill="none" /><circle cx="8" cy="16" r="3" fill="#fff" /><circle cx="15" cy="8.500" r="4.500" fill="#fff" /><circle cx="15" cy="8.500" r="2.700" fill="#cdd9e8" stroke="#17325c" /></svg></TaskBtn>
      <TaskBtn><svg width="22" height="22" viewBox="0 0 22 22"><rect x="1" y="1" width="20" height="20" rx="3" fill="#051c2a" stroke="#38b2e6" strokeWidth="1.400" /><text x="11" y="15.300" textAnchor="middle" textLength="12" fontSize="12" fontWeight="bold" fill="#d7f1ff" fontFamily="Open Sans, sans-serif">Ps</text></svg></TaskBtn>
      <TaskBtn><svg width="22" height="22" viewBox="0 0 22 22"><path d="M10 1A10 10 0 0 1 20.500 11" stroke="#3c8c34" strokeWidth="2.200" fill="none" /><path d="M2 10A9 9 0 0 0 9 19.800" stroke="#d8231c" strokeWidth="2.500" fill="none" /><circle cx="11" cy="11" r="8.300" fill="#f3f3f3" /><text x="11" y="15" textAnchor="middle" fontSize="11.500" fontWeight="bold" fill="#26282b" fontFamily="Liberation Sans, sans-serif">Ю</text></svg></TaskBtn>
      <TaskBtn $w={5} />
      <TaskBtn $w={40} $run><svg width="22" height="22" viewBox="0 0 22 22"><path d="M0 22L1.800 16A11 11 0 1 1 6 20.500Z" fill="#fff" /><path d="M1.800 20.200L3.200 15.600A9.200 9.200 0 1 1 6.400 18.900Z" fill="#2cc64c" /><path d="M7.200 5.500Q8.800 4.900 9.100 6.500L9.500 8Q9.600 8.600 8.500 9.600Q10 12.300 12.500 13.200Q13.500 11.800 14.100 12.100L16.200 13.200Q17 13.600 16 15Q14.500 16.600 11.500 15.200Q7.500 13.300 6 9.500Q5.300 7 7.200 5.500Z" fill="#fff" /></svg></TaskBtn>
      <TaskBtn $w={5} />
      <TaskBtn $w={48}><svg width="20" height="20" viewBox="0 0 20 20"><path d="M2 0H18Q20 0 20 2V20L16 17H2Q0 17 0 15V2Q0 0 2 0Z" fill="#6f7fd0" /><g transform="translate(2.500 1.500)"><FaDiscord size={15} color="#fff" /></g></svg></TaskBtn>
      <Tray>
        <Stroke s={12} vb="0 0 12 12" c="#fff"><path d="M1 8.500L6 3.500L11 8.500" /></Stroke>
        <VLine $h={1} $c="transparent" $l={9} />
        <Stroke s={16} vb="0 0 16 16" c="#fff"><path d="M5.500 3H15.200V11.500H4V7M1 1.500H4.500V5H1ZM2.700 5V7.500M9.500 11.500V14M6.500 14.200H12.500" /></Stroke>
        <VLine $h={1} $c="transparent" $l={7} />
        <Stroke s={16} vb="0 0 16 16" c="#fff"><path d="M1 6V10.500H3L6 13.500V3L3 6ZM8.500 6Q10 8.200 8.500 10.500M10.800 4.500Q13.200 8.200 10.800 12M13 3Q16.500 8.200 13 13.500" /></Stroke>
        <VLine $h={1} $c="transparent" $l={10} />
        <Fit w={22}>РУС</Fit>
        <Clock><Fit w={27}>16:46</Fit><Fit w={52}>16.01.2021</Fit></Clock>
        <VLine $h={40} $c="#55565a" $r={4} />
      </Tray>
    </Taskbar>
  );
}

export default function App() {
  return (
    <Screen>
      <Global />
      <Browser>
        <SidePanel />
        <Main>
          <BrowserChrome />
          <Viewport>
            <Page>
              <Site>
                <SiteHeader />
                <Body>
                  <CourseNav />
                  <Result />
                </Body>
              </Site>
            </Page>
            <Scroll>
              <Arrow><svg width="8" height="5" viewBox="0 0 8 5"><path d="M0 4.500L4 .5L8 4.500Z" fill="#a3a3a3" /></svg></Arrow>
              <Thumb />
              <Arrow><svg width="8" height="5" viewBox="0 0 8 5"><path d="M0 .5L4 4.500L8 .5Z" fill="#505050" /></svg></Arrow>
            </Scroll>
          </Viewport>
        </Main>
      </Browser>
      <WindowsBar />
      <Watermark>
        <WmBig><Fit w={184}>Активация Windows</Fit></WmBig>
        <WmSmall><Fit w={454}>Чтобы активировать Windows, перейдите в раздел "Параметры".</Fit></WmSmall>
      </Watermark>
    </Screen>
  );
}
